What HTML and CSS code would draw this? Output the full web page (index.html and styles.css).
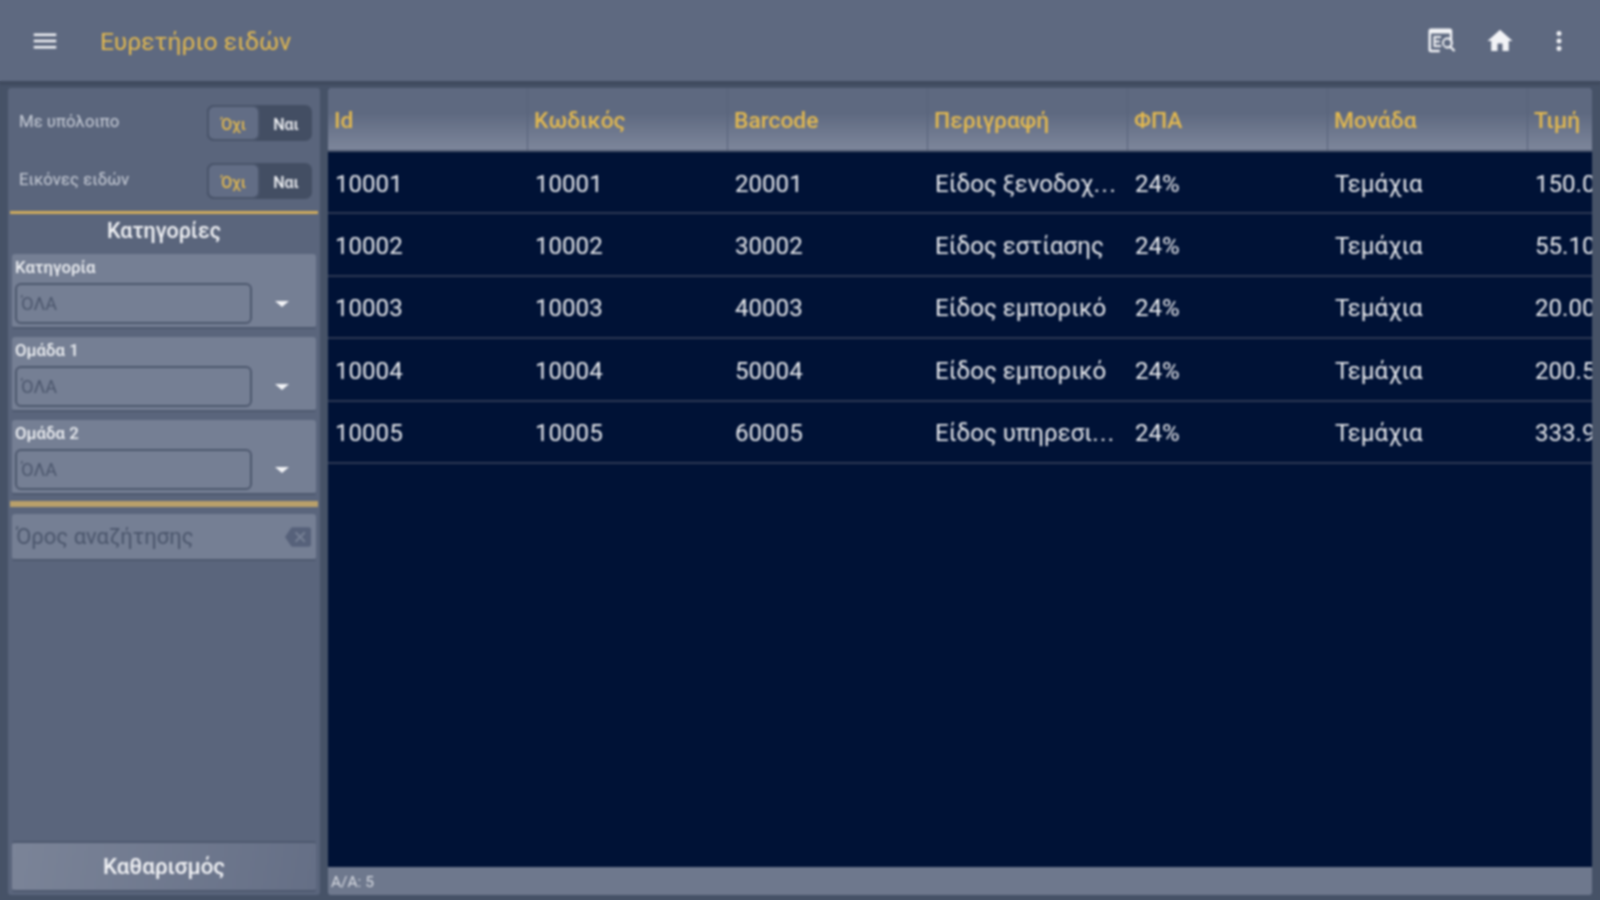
FILE: index.html
```html
<!DOCTYPE html>
<html lang="el">
<head>
<meta charset="utf-8">
<title>Ευρετήριο ειδών</title>
<link rel="stylesheet" href="styles.css">
</head>
<body>
<div class="app">
  <header class="topbar">
    <svg class="icon menu" viewBox="0 0 24 24"><path d="M3 18h18v-2H3v2zm0-5h18v-2H3v2zm0-7v2h18V6H3z"/></svg>
    <h1 class="title">Ευρετήριο ειδών</h1>
    <div class="actions">
      <svg class="icon" viewBox="0 0 24 24"><path d="M4 2h15a2 2 0 0 1 2 2v8h-2V6H4v13h7v2H4a2 2 0 0 1-2-2V4a2 2 0 0 1 2-2z"/><path d="M6 8h6v1.6H7.6v2H11v1.6H7.6v2H12V16.800H6z"/><path fill-rule="evenodd" d="M17 9a4.500 4.500 0 0 1 3.500 7.300l3 3-1.300 1.300-3-3A4.500 4.500 0 1 1 17 9zm0 1.800a2.700 2.700 0 1 0 0 5.400 2.700 2.700 0 0 0 0-5.400z"/></svg>
      <svg class="icon" viewBox="0 0 24 24"><path d="M10 20v-6h4v6h5v-8h3L12 3 2 12h3v8z"/></svg>
      <svg class="icon" viewBox="0 0 24 24"><path d="M12 8c1.100 0 2-.9 2-2s-.9-2-2-2-2 .9-2 2 .9 2 2 2zm0 2c-1.100 0-2 .9-2 2s.9 2 2 2 2-.9 2-2-.9-2-2-2zm0 6c-1.100 0-2 .9-2 2s.9 2 2 2 2-.9 2-2-.9-2-2-2z"/></svg>
    </div>
  </header>
  <main class="content">
    <aside class="side">
      <div class="switch-row">
        <span class="switch-label">Με υπόλοιπο</span>
        <div class="toggle"><span class="opt on">Όχι</span><span class="opt">Ναι</span></div>
      </div>
      <div class="switch-row second">
        <span class="switch-label">Εικόνες ειδών</span>
        <div class="toggle"><span class="opt on">Όχι</span><span class="opt">Ναι</span></div>
      </div>
      <div class="rule"></div>
      <div class="section-title">Κατηγορίες</div>
      <div class="combo">
        <div class="combo-label">Κατηγορία</div>
        <div class="combo-row"><div class="combo-input">ΌΛΑ</div><span class="caret"></span></div>
      </div>
      <div class="combo">
        <div class="combo-label">Ομάδα 1</div>
        <div class="combo-row"><div class="combo-input">ΌΛΑ</div><span class="caret"></span></div>
      </div>
      <div class="combo">
        <div class="combo-label">Ομάδα 2</div>
        <div class="combo-row"><div class="combo-input">ΌΛΑ</div><span class="caret"></span></div>
      </div>
      <div class="rule thick"></div>
      <div class="search">
        <span>Όρος αναζήτησης</span>
        <svg class="clear" viewBox="0 0 24 24"><path d="M22 3H7c-.69 0-1.230.35-1.590.88L0 12l5.410 8.110c.36.530.9.890 1.590.890h15c1.100 0 2-.9 2-2V5c0-1.100-.9-2-2-2zm-3 12.590L17.590 17 14 13.410 10.410 17 9 15.590 12.590 12 9 8.410 10.410 7 14 10.590 17.590 7 19 8.410 15.410 12 19 15.590z"/></svg>
      </div>
      <div class="spacer"></div>
      <button class="clear-btn">Καθαρισμός</button>
    </aside>
    <section class="grid-wrap">
      <div class="grid">
        <div class="row head">
          <div class="cell">Id</div><div class="cell">Κωδικός</div><div class="cell">Barcode</div><div class="cell">Περιγραφή</div><div class="cell">ΦΠΑ</div><div class="cell">Μονάδα</div><div class="cell">Τιμή</div>
        </div>
        <div class="row">
          <div class="cell">10001</div><div class="cell">10001</div><div class="cell">20001</div><div class="cell">Είδος ξενοδοχ<span class="dots">...</span></div><div class="cell">24%</div><div class="cell">Τεμάχια</div><div class="cell">150.00</div>
        </div>
        <div class="row">
          <div class="cell">10002</div><div class="cell">10002</div><div class="cell">30002</div><div class="cell">Είδος εστίασης</div><div class="cell">24%</div><div class="cell">Τεμάχια</div><div class="cell">55.10</div>
        </div>
        <div class="row">
          <div class="cell">10003</div><div class="cell">10003</div><div class="cell">40003</div><div class="cell">Είδος εμπορικό</div><div class="cell">24%</div><div class="cell">Τεμάχια</div><div class="cell">20.00</div>
        </div>
        <div class="row">
          <div class="cell">10004</div><div class="cell">10004</div><div class="cell">50004</div><div class="cell">Είδος εμπορικό</div><div class="cell">24%</div><div class="cell">Τεμάχια</div><div class="cell">200.50</div>
        </div>
        <div class="row">
          <div class="cell">10005</div><div class="cell">10005</div><div class="cell">60005</div><div class="cell">Είδος υπηρεσι<span class="dots">...</span></div><div class="cell">24%</div><div class="cell">Τεμάχια</div><div class="cell">333.90</div>
        </div>
      </div>
      <div class="status">Α/Α: 5</div>
    </section>
  </main>
</div>
</body>
</html>
```
FILE: styles.css
```css
* { box-sizing: border-box; }
html, body { margin: 0; height: 100%; overflow: hidden; }
body { background: linear-gradient(#5e6980 81px, #465267 81px); font-family: Roboto, "Noto Sans", sans-serif; color: #f2f3f6; }
.app { width: 1600px; height: 900px; display: flex; flex-direction: column; filter: blur(.8px); }

.topbar { height: 85px; flex: none; display: flex; align-items: center; padding: 1px 26px 0 30px; background: #5e6980; border-bottom: 4px solid #3f4a5e; }
.icon { width: 30px; height: 30px; fill: #f2f3f6; flex: none; }
.title { margin: 0 0 0 40px; font-size: 24.700px; font-weight: 400; color: #e2b84f; }
.actions { margin-left: auto; display: flex; gap: 29px; }

.content { flex: 1; min-height: 0; display: flex; gap: 8px; padding: 3px 8px 5px 8px; background: #465267; }

.side { width: 312px; flex: none; display: flex; flex-direction: column; padding: 0 4px 3px 4px; background: #5a657c; border-radius: 3px; }
.switch-row { display: flex; align-items: center; justify-content: space-between; height: 36px; margin-top: 17px; padding: 0 4px 0 7px; }
.switch-row.second { margin-top: 22px; }
.switch-label { font-size: 16.800px; color: #c9ced8; margin-top: -4px; }
.toggle { width: 105px; height: 36px; display: flex; border-radius: 7px; background: #434e63; font-size: 16px; }
.opt { flex: 1; display: flex; align-items: center; justify-content: center; font-weight: 500; padding-top: 2px; }
.opt.on { flex: none; width: 53px; background: #626d85; border: 2px solid #49546a; border-radius: 7px; color: #e2b84f; }

.rule { height: 3px; flex: none; margin: 12px -2px 0; background: #cfab5c; }
.rule.thick { height: 6px; margin-top: -2px; background: #b9a06a; }

.section-title { height: 40px; flex: none; display: flex; align-items: center; justify-content: center; font-size: 21.500px; font-weight: 500; padding-bottom: 7px; }

.combo { height: 75px; flex: none; margin-bottom: 8px; padding: 4px 0 0 3px; background: #757f94; border-radius: 3px; border-bottom: 2px solid #4d586e; }
.combo-label { font-size: 16.800px; line-height: 18px; font-weight: 500; color: #eef0f3; }
.combo-row { display: flex; align-items: center; margin-top: 7px; }
.combo-input { width: 237px; height: 41px; display: flex; align-items: center; padding-left: 4px; border: 2px solid #4c576d; border-radius: 6px; font-size: 18px; color: #4a556b; }
.caret { margin-left: 23px; width: 0; height: 0; border-left: 7px solid transparent; border-right: 7px solid transparent; border-top: 6px solid #f2f3f6; }

.search { height: 47px; flex: none; margin-top: 7px; display: flex; align-items: center; justify-content: space-between; padding: 0 5px 0 4px; background: #757f94; border-radius: 3px; border-bottom: 2px solid #4d586e; font-size: 22px; color: #4a556b; }
.clear { width: 26px; height: 26px; fill: #56617a; }
.spacer { flex: 1; }
.clear-btn { height: 51px; flex: none; padding: 0 0 1px; border: 0; border-top: 2px solid #4d586e; border-bottom: 2px solid #4d586e; border-radius: 3px; background: linear-gradient(100deg, #7b8498, #656f86); color: #f2f3f6; font: 500 22.300px Roboto, "Noto Sans", sans-serif; }

.grid-wrap { flex: 1; min-width: 0; display: flex; flex-direction: column; background: #001236; overflow: hidden; border-radius: 2px; }
.grid { flex: 1; min-height: 0; overflow: hidden; }
.row { display: grid; grid-template-columns: repeat(7, 200px); width: 1400px; height: 62.400px; padding-top: 3px; align-items: center; border-bottom: 2px solid #2c3853; font-size: 24.100px; color: #e9ebef; }
.row .cell { padding-left: 7px; white-space: nowrap; overflow: hidden; }
.row .cell:nth-child(7) { overflow: visible; }
.dots { letter-spacing: 1.500px; }
.row.head { height: 64px; padding-top: 0; border-bottom: 2px solid #4b566c; background: linear-gradient(#5e6980, #5e6980 40%, #7d869b); font-size: 22.800px; font-weight: 500; color: #e2b84f; align-items: stretch; }
.row.head .cell { display: flex; align-items: center; padding: 2px 0 0 6px; border-right: 1px solid #57627a; }
.status { height: 28px; flex: none; display: flex; align-items: center; padding: 1px 0 0 3px; background: #6e788d; font-size: 15.500px; color: #d9dce3; }
```
